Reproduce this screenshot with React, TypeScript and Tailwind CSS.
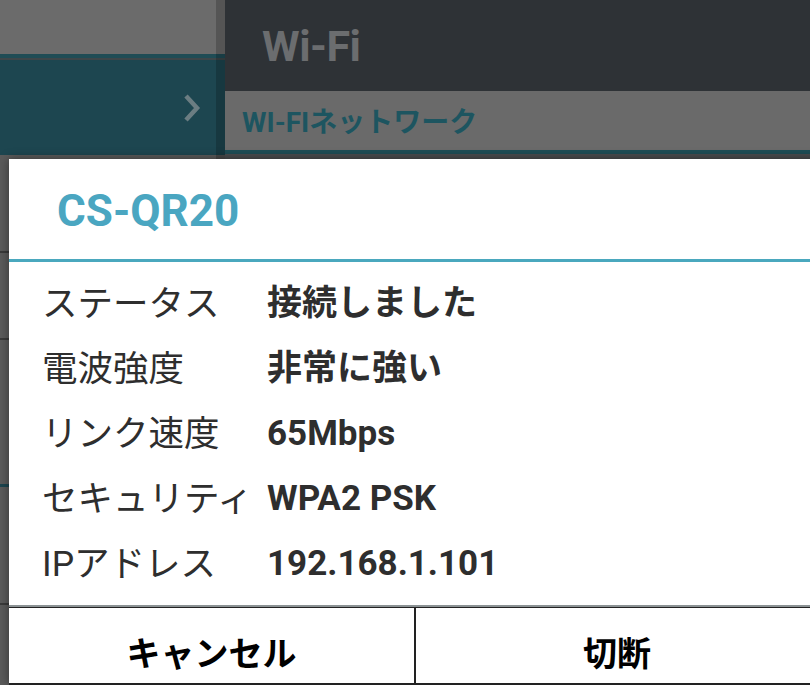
import React from 'react';

const rows: { label: string; value: string }[] = [
  { label: 'ステータス', value: '接続しました' },
  { label: '電波強度', value: '非常に強い' },
  { label: 'リンク速度', value: '65Mbps' },
  { label: 'セキュリティ', value: 'WPA2 PSK' },
  { label: 'IPアドレス', value: '192.168.1.101' },
];

const Chevron: React.FC = () => (
  <svg width="20" height="32" viewBox="0 0 20 32" className="text-[#6b7d82]">
    <path d="M4 4 L15 16 L4 28" fill="none" stroke="currentColor" strokeWidth="4.5" />
  </svg>
);

const Background: React.FC = () => (
  <div className="flex h-full">
    <div className="flex w-[225px] flex-col">
      <div className="h-[54px] border-r-[9px] border-r-black/20 bg-[#6b6b6b]" />
      <div className="h-[4px] border-r-[9px] border-r-black/20 bg-[#1f4c55]" />
      <div className="h-[2px] border-r-[9px] border-r-black/20 bg-[#3d4649]" />
      <div className="flex h-[95px] items-center justify-end border-r-[9px] border-r-black/20 bg-[#1d4650] pr-[14px]">
        <Chevron />
      </div>
      <div className="h-[98px] border-b-2 border-r-[9px] border-b-[#3a3a3a] border-r-black/20 bg-[#5b5b5b]" />
      <div className="h-[87px] border-b-2 border-r-[9px] border-b-[#3a3a3a] border-r-black/20 bg-[#5b5b5b]" />
      <div className="h-[147px] border-b-[3px] border-r-[9px] border-b-[#1d4650] border-r-black/20 bg-[#5b5b5b]" />
      <div className="h-[118px] border-b-2 border-r-[9px] border-b-[#3a3a3a] border-r-black/20 bg-[#5b5b5b]" />
      <div className="flex-1 border-r-[9px] border-r-black/20 bg-[#5b5b5b]" />
    </div>
    <div className="flex flex-1 flex-col">
      <div className="flex h-[91px] items-center bg-[#2e3236] pl-[37px] pt-[2px]">
        <span className="text-[43px] font-bold tracking-[-0.5px] text-[#6b6d6f]">Wi-Fi</span>
      </div>
      <div className="flex h-[59px] items-center bg-[#6a6a6a] pl-[17px] pt-[4px]">
        <span className="text-[28px] font-bold text-[#1d5560]">WI-FIネットワーク</span>
      </div>
      <div className="h-[4px] bg-[#1e4d55]" />
      <div className="flex-1 bg-[#4a4c4e]" />
    </div>
  </div>
);

const Dialog: React.FC = () => (
  <div className="absolute bottom-0 left-[9px] right-[-8px] top-[159px] flex flex-col bg-white shadow-[0_0_10px_rgba(0,0,0,0.45)]">
    <div className="flex h-[100px] items-center pl-[48px] pt-[4px]">
      <span className="text-[44px] font-bold text-[#4aa6c1]">CS-QR20</span>
    </div>
    <div className="h-[3px] bg-[#4aa8be]" />
    <div className="flex flex-col pb-[8px] pt-[10px]">
      {rows.map((r) => (
        <div key={r.label} className="flex h-[65px] items-center">
          <span className="w-[258px] shrink-0 whitespace-nowrap pl-[33px] text-[35.5px] text-[#2e2e2e]">
            {r.label}
          </span>
          <span className="whitespace-nowrap text-[35px] font-bold text-[#2e2e2e]">{r.value}</span>
        </div>
      ))}
    </div>
    <div className="h-[2px] bg-[#8b9294]" />
    <div className="flex flex-1 border-b-2 border-t border-b-[#222] border-t-[#222]">
      <div className="flex w-[407px] items-center justify-center border-r-2 border-r-[#222] pt-[18px]">
        <span className="text-[34px] font-bold text-black">キャンセル</span>
      </div>
      <div className="flex flex-1 items-center justify-center pt-[18px]">
        <span className="text-[34px] font-bold text-black">切断</span>
      </div>
    </div>
  </div>
);

export default function App() {
  return (
    <div className="relative h-[685px] w-[810px] overflow-hidden font-[Roboto,'Noto_Sans_CJK_JP',sans-serif]">
      <Background />
      <Dialog />
    </div>
  );
}
